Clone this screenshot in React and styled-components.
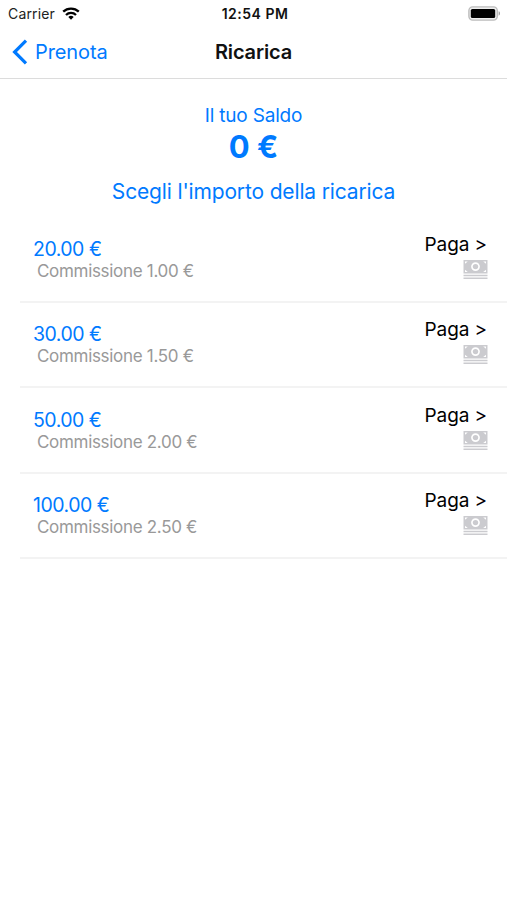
import styled, { createGlobalStyle } from "styled-components";

const recharges = [
    { amount: "20.00 €", fee: "1.00 €" },
    { amount: "30.00 €", fee: "1.50 €" },
    { amount: "50.00 €", fee: "2.00 €" },
    { amount: "100.00 €", fee: "2.50 €" },
];

function WifiIcon() {
    return (
        <svg width="18" height="14" viewBox="0 0 18 14" fill="none" stroke="#000" strokeWidth="2.3">
            <path d="M1.2 4.7a11.2 11.2 0 0 1 15.6 0" />
            <path d="M4 8a7.1 7.1 0 0 1 10 0" />
            <path d="M9 12.8 6.3 10.1a3.9 3.9 0 0 1 5.4 0z" fill="#000" stroke="none" />
        </svg>
    );
}

function BatteryIcon() {
    return (
        <svg width="33" height="15" viewBox="0 0 33 15">
            <rect x="0.9" y="0.9" width="28.4" height="13.2" rx="3.8" fill="#eee" stroke="#bcbcbc" strokeWidth="1.4" />
            <rect x="2.8" y="3" width="24.4" height="9" rx="1.6" fill="#000" />
            <path d="M30.6 5.3c1.9.6 1.9 3.8 0 4.4z" fill="#a0a0a0" />
        </svg>
    );
}

function BackIcon() {
    return (
        <svg width="16" height="26" viewBox="0 0 16 26" fill="none" stroke="#007aff" strokeWidth="3.2">
            <path d="M14 1.6 2.6 13 14 24.4" />
        </svg>
    );
}

function CashIcon() {
    return (
        <svg width="25" height="20" viewBox="0 0 25 20" fill="#cbcbcf">
            <path
                fillRule="evenodd"
                d="M.5 0h24v13.5H.5zM12.5 2.2a4.4 4.4 0 1 0 0 8.8 4.4 4.4 0 0 0 0-8.8zM2 1.5v2.3l2.8-2.3zM23 1.5v2.3l-2.8-2.3zM2 12V9.7L4.8 12zM23 12V9.7L20.2 12z"
            />
            <circle cx="12.5" cy="6.6" r="2.7" />
            <path d="M.5 14.7h24v1.6H.5zM.5 17.5h24v1.6H.5z" />
        </svg>
    );
}

function RechargeRow({ amount, fee }) {
    return (
        <Row>
            <Prices>
                <Amount>{amount}</Amount>
                <Fee>Commissione {fee}</Fee>
            </Prices>
            <Pay>
                <PayLabel>Paga &gt;</PayLabel>
                <CashIcon />
            </Pay>
        </Row>
    );
}

function App() {
    return (
        <Screen>
            <GlobalStyle />
            <StatusBar>
                <Carrier>
                    Carrier
                    <WifiIcon />
                </Carrier>
                <Clock>12:54 PM</Clock>
                <Battery>
                    <BatteryIcon />
                </Battery>
            </StatusBar>

            <NavBar>
                <BackButton>
                    <BackIcon />
                    Prenota
                </BackButton>
                <Title>Ricarica</Title>
            </NavBar>

            <Balance>
                <BalanceLabel>Il tuo Saldo</BalanceLabel>
                <BalanceValue>0 €</BalanceValue>
                <Prompt>Scegli l'importo della ricarica</Prompt>
            </Balance>

            <List>
                {recharges.map(item => (
                    <RechargeRow key={item.amount} {...item} />
                ))}
            </List>
        </Screen>
    );
}

const GlobalStyle = createGlobalStyle`
    * {
        box-sizing: border-box;
    }

    body {
        margin: 0;
        background: #fff;
        font-family: Inter, "Liberation Sans", sans-serif;
    }

    svg {
        display: block;
        flex-shrink: 0;
    }
`;

const Screen = styled.main`
    display: flex;
    flex-direction: column;
    height: 900px;
    overflow: hidden;
    white-space: nowrap;
`;

const StatusBar = styled.header`
    display: grid;
    grid-template-columns: 1fr auto 1fr;
    align-items: center;
    height: 27px;
    padding: 0 6px 0 8px;
`;

const Carrier = styled.div`
    display: flex;
    align-items: center;
    gap: 7px;
    color: #222;
    font-size: 14px;
    letter-spacing: 0.15px;
`;

const Clock = styled.div`
    padding-left: 1px;
    color: #111;
    font-size: 14px;
    font-weight: 600;
    letter-spacing: 0.5px;
`;

const Battery = styled.div`
    justify-self: end;
`;

const NavBar = styled.nav`
    display: grid;
    grid-template-columns: 1fr auto 1fr;
    align-items: center;
    height: 52px;
    padding: 0 12px 1px;
    border-bottom: 1px solid #dcdcdc;
`;

const BackButton = styled.button`
    display: flex;
    align-items: center;
    gap: 7px;
    padding: 0;
    border: 0;
    background: none;
    color: #007aff;
    font: inherit;
    font-size: 20px;
    letter-spacing: -0.1px;
`;

const Title = styled.h1`
    margin: 0;
    color: #111;
    font-size: 20px;
    font-weight: 600;
    letter-spacing: -0.15px;
`;

const Balance = styled.section`
    display: flex;
    flex-direction: column;
    align-items: center;
    height: 138px;
    padding-top: 24px;
    color: #007aff;
`;

const BalanceLabel = styled.div`
    font-size: 19px;
    line-height: 25px;
    letter-spacing: -0.18px;
`;

const BalanceValue = styled.div`
    font-size: 31px;
    font-weight: 700;
    line-height: 38px;
`;

const Prompt = styled.div`
    margin-top: 12px;
    font-size: 21px;
    line-height: 28px;
    letter-spacing: -0.15px;
`;

const List = styled.ul`
    margin: 0;
    padding: 0 0 0 20px;
    list-style: none;
`;

const Row = styled.li`
    display: flex;
    justify-content: space-between;
    height: 85.5px;
    padding: 0 20px 0 13px;
    border-bottom: 2px solid #f3f3f3;
`;

const Prices = styled.div`
    display: flex;
    flex-direction: column;
    padding-top: 19.5px;
`;

const Amount = styled.span`
    color: #007aff;
    font-size: 19.5px;
    line-height: 24px;
    letter-spacing: -0.5px;
`;

const Fee = styled.span`
    padding-left: 4px;
    color: #999;
    font-size: 17px;
    line-height: 20px;
    letter-spacing: -0.31px;
`;

const Pay = styled.div`
    display: flex;
    flex-direction: column;
    align-items: flex-end;
    padding-top: 15.5px;

    svg {
        margin-right: -1px;
    }
`;

const PayLabel = styled.span`
    margin-bottom: 3px;
    color: #000;
    font-size: 19px;
    line-height: 24px;
    letter-spacing: -0.1px;
`;

export default App;
